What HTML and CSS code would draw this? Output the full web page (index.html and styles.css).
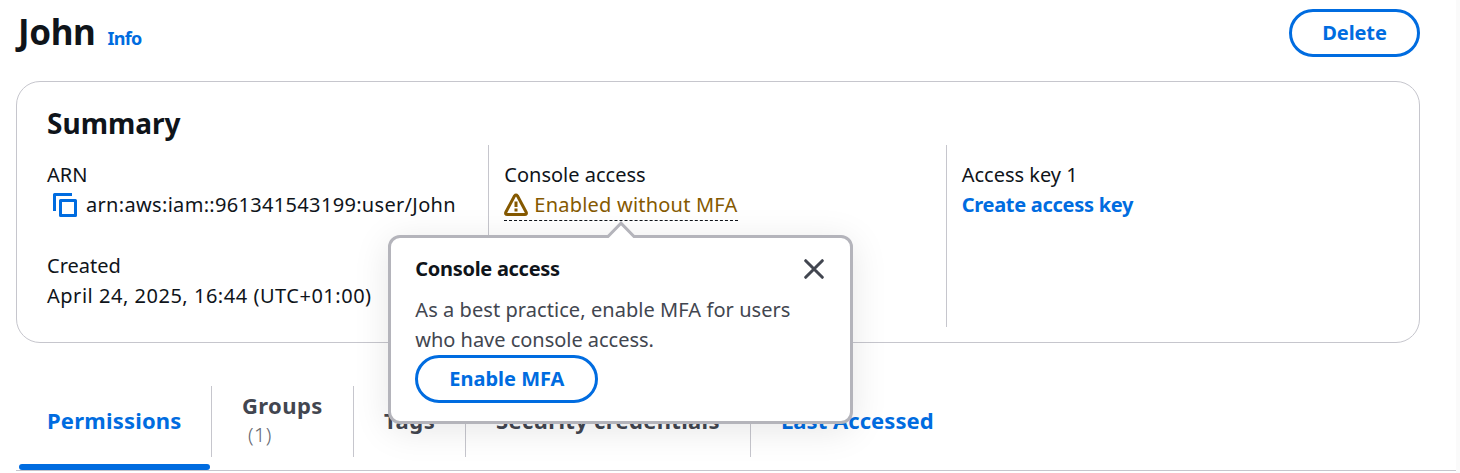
FILE: index.html
```html
<!DOCTYPE html>
<html lang="en">
<head>
<meta charset="utf-8">
<title>John</title>
<link rel="stylesheet" href="styles.css">
</head>
<body>
<main class="page">
  <header class="page-header">
    <div class="heading">
      <h1 class="user-name"><span>John</span></h1>
      <a class="info-link"><span>Info</span></a>
    </div>
    <button class="button button-delete"><span>Delete</span></button>
  </header>

  <section class="summary">
    <h2 class="summary-title"><span>Summary</span></h2>
    <div class="columns">
      <div class="column">
        <div class="field">
          <div class="label"><span>ARN</span></div>
          <div class="value copy-row">
            <svg class="copy-icon" width="24" height="24" viewBox="0 0 24 24" fill="none" stroke="#006ce0" stroke-width="3" stroke-linejoin="round"><path d="M1.5 18V1.5H19"/><rect x="7.5" y="7.5" width="15" height="15"/></svg>
            <span class="arn">arn:aws:iam::961341543199:user/John</span>
          </div>
        </div>
        <div class="field">
          <div class="label"><span>Created</span></div>
          <div class="value created"><span>April 24, 2025, 16:44 (UTC+01:00)</span></div>
        </div>
      </div>
      <div class="column column-divided">
        <div class="label"><span>Console access</span></div>
        <div class="status">
          <svg class="warning-icon" width="24" height="24" viewBox="0 0 24 24" fill="none" stroke="#855900" stroke-width="3" stroke-linejoin="round"><path d="M10.6 2.8 1.8 19.2Q1 21.5 3.2 21.5H20.8Q23 21.5 22.2 19.2L13.4 2.8Q12 1 10.6 2.8Z"/><path d="M12 8.5V14M12 15.5V18.5"/></svg>
          <span class="status-text">Enabled without MFA</span>
        </div>
        <div class="popover">
          <svg class="popover-arrow" width="34" height="18" viewBox="0 0 34 18"><path d="M3 18 17 3 31 18Z" fill="#fff"/><path d="M1.5 16.5H4L17 3.2 30 16.5H32.5" fill="none" stroke="#b4b4bb" stroke-width="3"/></svg>
          <div class="popover-head">
            <h3 class="popover-title"><span>Console access</span></h3>
            <svg class="close-icon" width="20" height="20" viewBox="0 0 20 20" fill="none" stroke="#424650" stroke-width="3" stroke-linecap="round"><path d="M1.7 1.7 18.3 18.3M18.3 1.7 1.7 18.3"/></svg>
          </div>
          <p class="popover-text"><span class="text-first">As a best practice, enable MFA for users</span><br><span class="text-second">who have console access.</span></p>
          <button class="button button-mfa"><span>Enable MFA</span></button>
        </div>
      </div>
      <div class="column column-divided">
        <div class="label"><span>Access key 1</span></div>
        <a class="value create-key"><span>Create access key</span></a>
      </div>
    </div>
  </section>

  <nav class="tabs">
    <a class="tab tab-permissions"><span>Permissions</span></a>
    <a class="tab tab-groups"><span>Groups</span><small class="count">(1)</small></a>
    <a class="tab tab-tags"><span>Tags</span></a>
    <a class="tab tab-security"><span>Security credentials</span></a>
    <a class="tab tab-last"><span>Last Accessed</span></a>
  </nav>
</main>
</body>
</html>
```
FILE: styles.css
```css
* { box-sizing: border-box; }
body {
  margin: 0;
  background: #fff;
  color: #0f141a;
  font: 20px/30px "Noto Sans", "Open Sans", sans-serif;
  overflow: hidden;
}
h1, h2, h3, p { margin: 0; }
span { white-space: nowrap; }
.page {
  height: 473px;
  padding: 9px 36px 0 16px;
  border-right: 4px solid #fafafa;
}
.page-header {
  display: flex;
  justify-content: space-between;
  height: 72px;
}
.heading { display: flex; align-items: baseline; gap: 12px; height: 48px; padding-left: 2px; }
.user-name { font-size: 35px; line-height: 46px; font-weight: 700; letter-spacing: -.4px; }
.info-link { font-size: 18px; font-weight: 700; color: #006ce0; letter-spacing: -.7px; }
.button {
  height: 48px;
  padding: 0;
  border: 3px solid #006ce0;
  border-radius: 24px;
  background: #fff;
  color: #006ce0;
  font: 700 20px/30px "Noto Sans", "Open Sans", sans-serif;
}
.button-delete { width: 131px; letter-spacing: -.1px; }
.summary {
  height: 262px;
  padding: 23px 30px 0;
  border: 1px solid #c6c6cd;
  border-radius: 24px;
}
.summary-title { font-size: 28px; line-height: 36px; font-weight: 700; height: 40px; }
.columns {
  display: grid;
  grid-template-columns: repeat(3, 1fr);
  column-gap: 30px;
  height: 182px;
}
.column {
  display: flex;
  flex-direction: column;
  align-items: flex-start;
  gap: 31px;
  padding-top: 15px;
}
.column-divided {
  position: relative;
  gap: 0;
  margin-left: -16px;
  padding-left: 15px;
  border-left: 1px solid #c6c6cd;
}
.copy-row { display: flex; align-items: center; gap: 9px; padding-left: 6px; }
.arn { letter-spacing: .32px; }
.created { letter-spacing: .52px; }
.status {
  display: flex;
  align-items: center;
  gap: 6px;
  height: 31px;
  border-bottom: 1px dashed #0f141a;
  color: #855900;
  letter-spacing: .21px;
}
.create-key { color: #006ce0; font-weight: 700; letter-spacing: -.28px; }
.popover {
  position: absolute;
  z-index: 2;
  left: -101px;
  top: 90px;
  width: 465px;
  height: 189px;
  padding: 15px 26px 0 24px;
  border: 3px solid #b4b4bb;
  border-radius: 12px;
  background: #fff;
  box-shadow: 0 6px 36px rgba(0, 7, 22, .1);
}
.popover-arrow { position: absolute; left: 213px; top: -18px; }
.popover-head { display: flex; justify-content: space-between; align-items: center; height: 32px; }
.popover-title { font-size: 20px; font-weight: 700; letter-spacing: -.3px; }
.popover-text { padding-top: 10px; height: 70px; color: #424650; }
.text-first { letter-spacing: .06px; }
.text-second { letter-spacing: -.03px; }
.button-mfa { display: block; width: 183px; }
.tabs {
  display: flex;
  height: 128px;
  padding-top: 43px;
  border-bottom: 1px solid #c6c6cd;
  width: 1440px;
  font-size: 22px;
  font-weight: 700;
  color: #424650;
}
.tab {
  position: relative;
  display: flex;
  flex-direction: column;
  justify-content: center;
  height: 71px;
  padding-left: 30px;
  padding-bottom: 4px;
  border-right: 1px solid #c6c6cd;
}
.tab-permissions { width: 196px; padding-left: 31px; color: #006ce0; letter-spacing: .2px; }
.tab-permissions::after {
  content: "";
  position: absolute;
  left: 3px;
  bottom: -13px;
  width: 191px;
  height: 6px;
  border-radius: 3px;
  background: #006ce0;
}
.tab-groups { width: 142px; letter-spacing: .4px; }
.tab-tags { width: 112px; letter-spacing: .6px; }
.tab-security { width: 285px; letter-spacing: .33px; }
.tab-last { border: 0; color: #006ce0; letter-spacing: .05px; }
.count { padding-left: 6px; font-size: 20px; font-weight: 300; color: #656871; }
```
